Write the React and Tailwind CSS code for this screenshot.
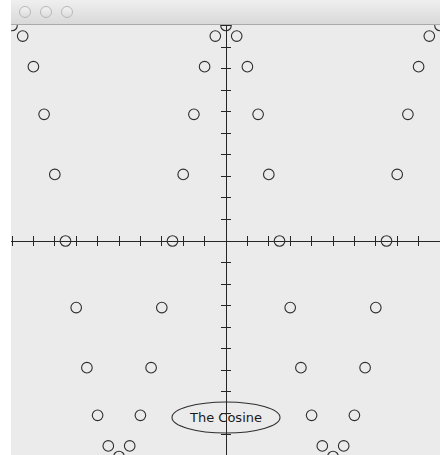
import React from 'react';

const CX = 226;
const CY = 241;
const STEP = 10.7;
const AMP = 215.5;

const points = Array.from({ length: 41 }, (_, i) => {
  const k = i - 20;
  return { k, x: CX + k * STEP, y: CY - AMP * Math.cos((k * Math.PI) / 10) };
});

const ticks = Array.from({ length: 21 }, (_, i) => i - 10);

function CosinePlot() {
  return (
    <svg width="429" height="430" viewBox="11 25 429 430" className="block">
      <ellipse cx="226" cy="417.5" rx="54" ry="15.5" fill="none" stroke="#2e2e2e" strokeWidth="1.1" />
      <text
        x="226"
        y="422"
        textAnchor="middle"
        fontFamily="'DejaVu Sans', 'Liberation Sans', sans-serif"
        fontSize="13"
        fill="#1a1a1a"
      >
        The Cosine
      </text>

      <g stroke="#262626" strokeWidth="1" shapeRendering="crispEdges">
        <line x1="11" y1={CY} x2="440" y2={CY} />
        <line x1={CX} y1="25" x2={CX} y2="455" />
        {ticks.map((j) => (
          <line key={`tx${j}`} x1={CX + j * 21.4} y1={CY - 5} x2={CX + j * 21.4} y2={CY + 5} />
        ))}
        {ticks.map((j) => (
          <line key={`ty${j}`} x1={CX - 5} y1={CY + j * 21.55} x2={CX + 5} y2={CY + j * 21.55} />
        ))}
      </g>

      <g fill="none" stroke="#2e2e2e" strokeWidth="1.1">
        {points.map((p) => (
          <circle key={p.k} cx={p.x} cy={p.y} r="5.3" />
        ))}
      </g>
    </svg>
  );
}

export default function App() {
  return (
    <div className="w-[446px] h-[455px] bg-white overflow-hidden">
      <div className="ml-[11px] w-[429px] h-[455px] flex flex-col bg-[#ebebeb] overflow-hidden">
        <div className="h-[25px] shrink-0 flex items-center gap-[9px] pl-[8px] pb-[1px] border-b border-[#a9a9a9] bg-linear-to-b from-[#efefef] to-[#d9d9d9]">
          <span className="w-[12px] h-[12px] rounded-full border border-[#b8b8b8] bg-linear-to-b from-[#f2f2f2] to-[#dcdcdc]" />
          <span className="w-[12px] h-[12px] rounded-full border border-[#b8b8b8] bg-linear-to-b from-[#f2f2f2] to-[#dcdcdc]" />
          <span className="w-[12px] h-[12px] rounded-full border border-[#b8b8b8] bg-linear-to-b from-[#f2f2f2] to-[#dcdcdc]" />
        </div>
        <div className="flex-1 overflow-hidden">
          <CosinePlot />
        </div>
      </div>
    </div>
  );
}
